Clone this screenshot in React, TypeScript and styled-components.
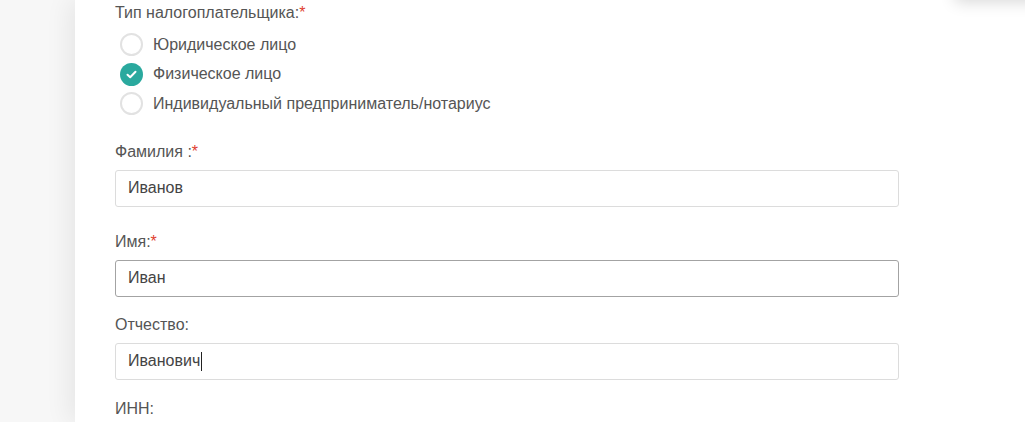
import styled, { createGlobalStyle } from 'styled-components';

const GlobalStyle = createGlobalStyle`
	html, body {
		margin: 0;
		padding: 0;
		background: #f7f7f7;
		font-family: 'Liberation Sans', Arial, sans-serif;
		overflow: hidden;
	}
`;

const Page = styled.div`
	height: 422px;
	padding-left: 75px;
	position: relative;
	overflow: hidden;
`;

const TopShadow = styled.div`
	position: absolute;
	top: -40px;
	left: 955px;
	right: -40px;
	height: 40px;
	background: #fff;
	box-shadow: 0 2px 16px rgba(0, 0, 0, 0.16);
`;

const Card = styled.main`
	box-sizing: border-box;
	background: #fff;
	height: 100%;
	padding: 3px 40px 0;
	box-shadow: -6px 0 24px rgba(0, 0, 0, 0.07);
`;

const Form = styled.form`
	width: 784px;
	display: flex;
	flex-direction: column;
`;

const Field = styled.div<{ $gap?: number }>`
	display: flex;
	flex-direction: column;
	margin-bottom: ${(p) => p.$gap ?? 0}px;
`;

const Label = styled.label`
	font-size: 16px;
	line-height: 20px;
	color: #555;
	margin-bottom: 8px;
`;

const Required = styled.span`
	color: #e0402f;
`;

const RadioList = styled.div`
	display: flex;
	flex-direction: column;
	margin-top: -1px;
`;

const RadioRow = styled.div`
	display: flex;
	align-items: center;
	gap: 10px;
	height: 29.5px;
	padding-left: 5px;
	font-size: 16px;
	color: #555;
`;

const RadioCircle = styled.span<{ $checked?: boolean }>`
	width: 23px;
	height: 23px;
	box-sizing: border-box;
	border-radius: 50%;
	border: ${(p) => (p.$checked ? 'none' : '2px solid #e2e2e2')};
	background: ${(p) => (p.$checked ? '#2aa99e' : '#fff')};
	display: flex;
	align-items: center;
	justify-content: center;
	flex-shrink: 0;
`;

const InputBox = styled.div<{ $active?: boolean }>`
	height: 37px;
	box-sizing: border-box;
	border: 1px solid ${(p) => (p.$active ? '#a3a3a3' : '#dcdcdc')};
	border-radius: 3px;
	padding: 0 12px;
	display: flex;
	align-items: center;
	font-size: 16px;
	color: #444;
`;

const Caret = styled.span`
	display: inline-block;
	width: 1px;
	height: 19px;
	background: #222;
	margin-left: 1px;
`;

const CheckIcon = () => (
	<svg width="13" height="13" viewBox="0 0 13 13" fill="none">
		<path
			d="M2.5 6.8 L5.2 9.3 L10.5 3.8"
			stroke="#fff"
			strokeWidth="2"
			strokeLinecap="round"
			strokeLinejoin="round"
		/>
	</svg>
);

const payerTypes = [
	{ title: 'Юридическое лицо', checked: false },
	{ title: 'Физическое лицо', checked: true },
	{ title: 'Индивидуальный предприниматель/нотариус', checked: false }
];

const App = () => {
	return (
		<>
			<GlobalStyle />
			<Page>
				<TopShadow />
				<Card>
					<Form>
						<Field $gap={23}>
							<Label>
								Тип налогоплательщика:<Required>*</Required>
							</Label>
							<RadioList>
								{payerTypes.map((item) => (
									<RadioRow key={item.title}>
										<RadioCircle $checked={item.checked}>
											{item.checked && <CheckIcon />}
										</RadioCircle>
										{item.title}
									</RadioRow>
								))}
							</RadioList>
						</Field>

						<Field $gap={25}>
							<Label>
								Фамилия :<Required>*</Required>
							</Label>
							<InputBox>Иванов</InputBox>
						</Field>

						<Field $gap={18}>
							<Label>
								Имя:<Required>*</Required>
							</Label>
							<InputBox $active>Иван</InputBox>
						</Field>

						<Field $gap={19}>
							<Label>Отчество:</Label>
							<InputBox>
								Иванович
								<Caret />
							</InputBox>
						</Field>

						<Field>
							<Label>ИНН:</Label>
						</Field>
					</Form>
				</Card>
			</Page>
		</>
	);
};

export default App;
